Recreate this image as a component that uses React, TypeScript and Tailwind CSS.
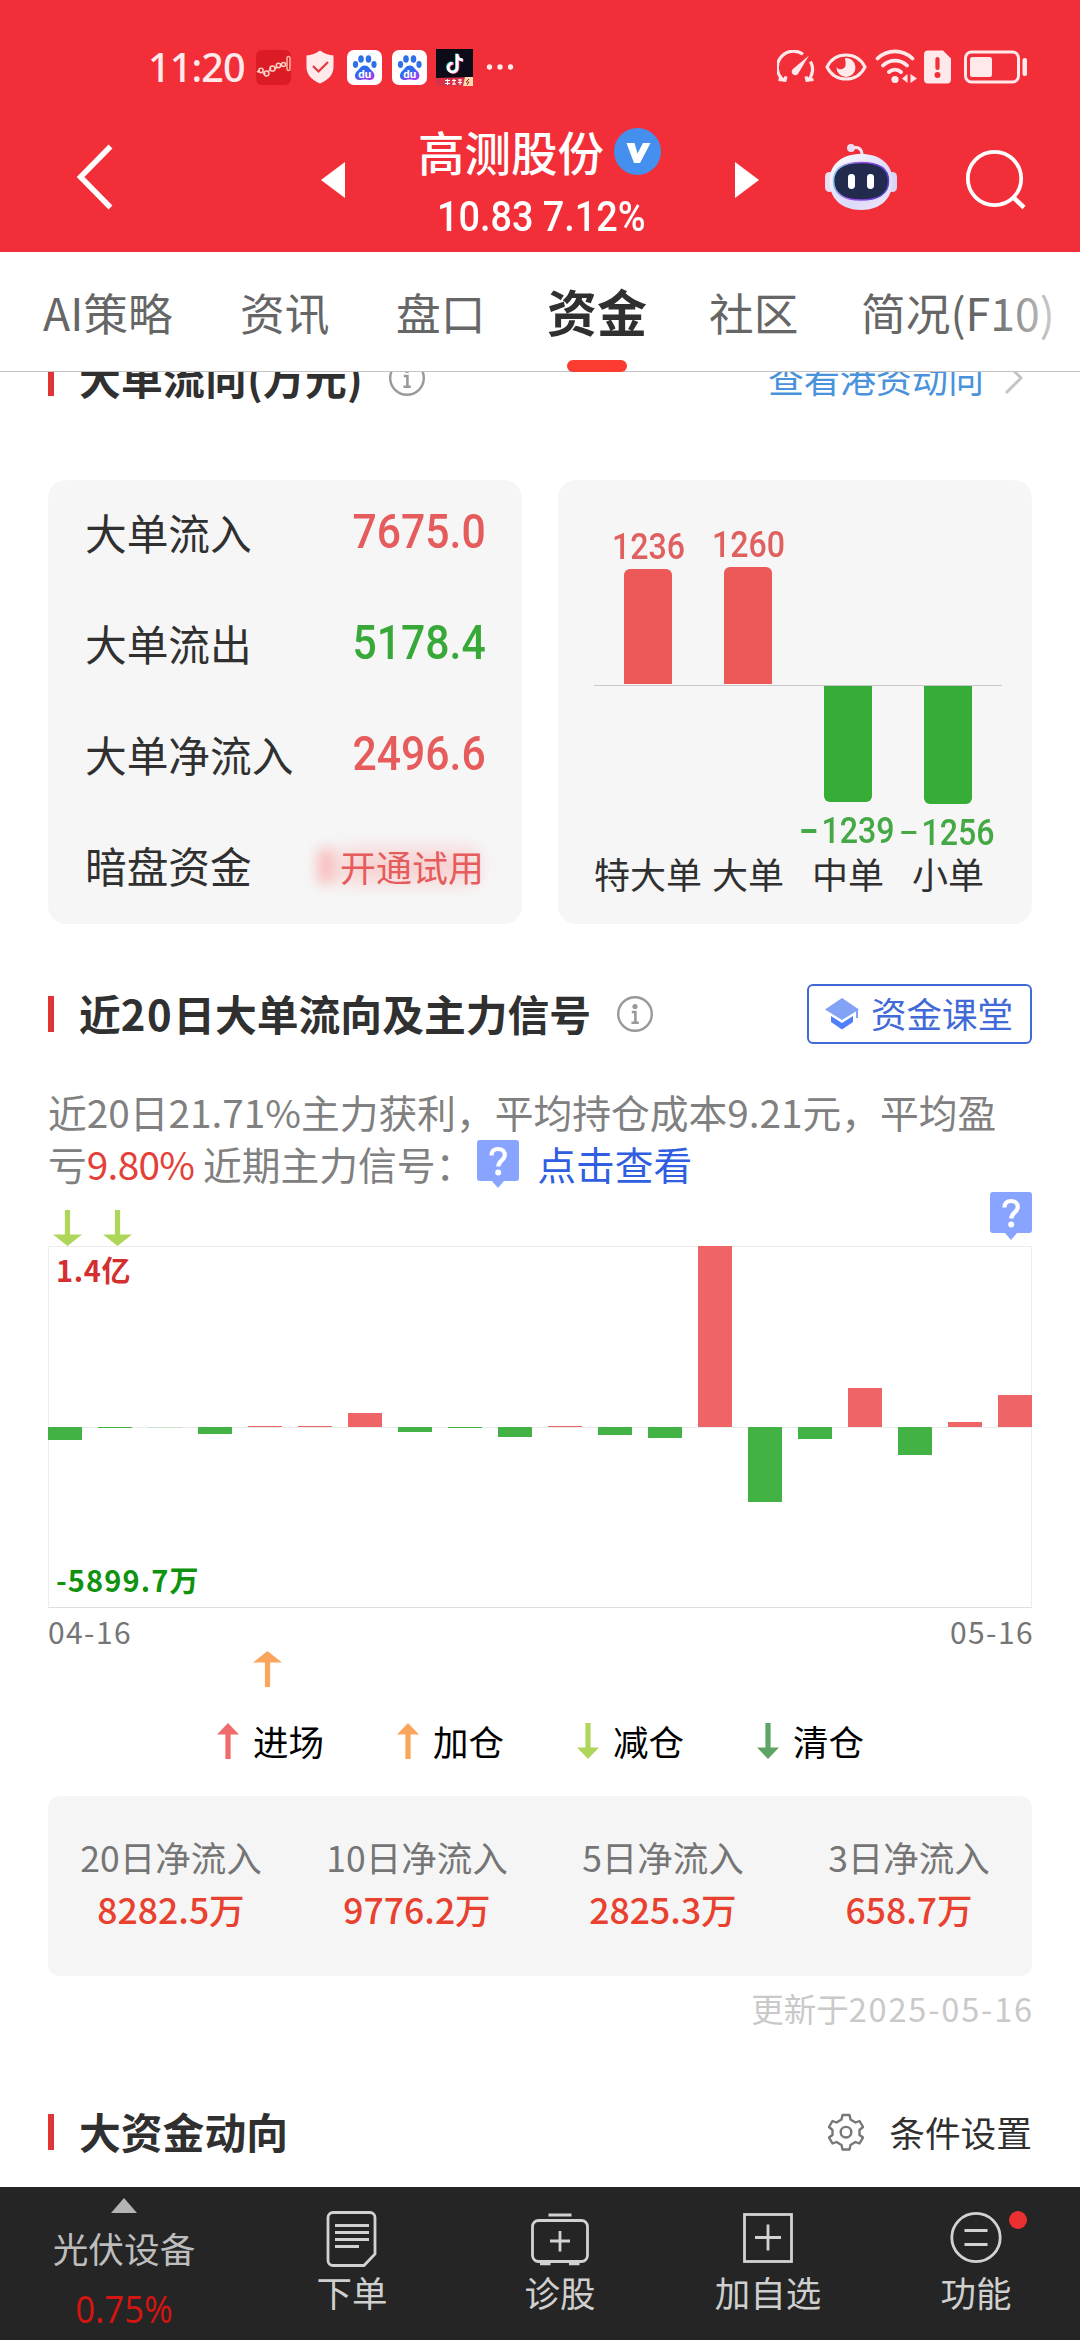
import type { ReactNode } from "react";

const DIN = "font-['Roboto','Noto_Sans_CJK_SC',sans-serif] font-medium";

function InfoIcon() {
  return (
    <svg width="38" height="38" viewBox="0 0 38 38" fill="none" stroke="#999" strokeWidth="2.4">
      <circle cx="19" cy="19" r="16.8" />
      <circle cx="19" cy="11.5" r="2.6" fill="#999" stroke="none" />
      <path d="M15.8 17h3.6v10.5M15.4 27.8h7.4" strokeWidth="2.6" />
    </svg>
  );
}

function Arrow({ color, down = false, head = 22 }: { color: string; down?: boolean; head?: number }) {
  const h = head / 2;
  return (
    <svg width={head} height="36" viewBox={`${-h} 0 ${head} 36`} fill={color} className={down ? "rotate-180" : ""}>
      <path d={`M0 0L${h} 11.5H2.6V36H-2.6V11.5H${-h}Z`} />
    </svg>
  );
}

function HelpBadge() {
  return (
    <svg width="42" height="48" viewBox="0 0 42 48" fill="none">
      <path d="M3 0H39a3 3 0 0 1 3 3V38a3 3 0 0 1-3 3H27L21 48L15 41H3a3 3 0 0 1-3-3V3a3 3 0 0 1 3-3Z" fill="#88a4ff" />
      <path d="M14.5 15.5C14.5 11 17 9 21 9s6.8 2.300 6.800 6c0 5.500-6.500 5.200-6.500 11.500" stroke="#fff" strokeWidth="4.200" />
      <circle cx="21.2" cy="32.500" r="3" fill="#fff" />
    </svg>
  );
}

function Baidu() {
  return (
    <svg width="35" height="35" viewBox="0 0 35 35">
      <defs>
        <linearGradient id="paw" x1="0" y1="0" x2="0.6" y2="1">
          <stop offset="0.5" stopColor="#2b6cf0" />
          <stop offset="1" stopColor="#a03cf0" />
        </linearGradient>
      </defs>
      <rect width="35" height="35" rx="7" fill="#fff" />
      <g fill="#2f6fe8">
        <ellipse cx="14" cy="9" rx="2.800" ry="3.800" />
        <ellipse cx="21.500" cy="9" rx="2.800" ry="3.800" />
        <ellipse cx="8.500" cy="14.500" rx="2.600" ry="3.400" />
        <ellipse cx="27" cy="14.500" rx="2.600" ry="3.400" />
      </g>
      <path d="M17.700 15.500c4 0 5 3.500 7.500 5.500 3.500 3 3 9-2.200 9-2 0-3-.5-5.300-.5s-3.300.5-5.300.5c-5.200 0-5.700-6-2.200-9 2.500-2 3.500-5.500 7.500-5.500Z" fill="url(#paw)" />
      <text x="17.800" y="27.500" textAnchor="middle" fontFamily="Roboto, sans-serif" fontSize="11.500" fontWeight="700" fill="#fff">du</text>
    </svg>
  );
}

function StatusBar() {
  return (
    <div className="flex h-[114px] items-center pt-[20px] pl-[148px]">
      <span className="w-[108px] font-['Noto_Sans','Noto_Sans_CJK_SC',sans-serif] text-[39.500px] leading-[50px] font-medium tracking-[-0.900px] text-[#ffe9ea]">11:20</span>
      <svg width="35" height="35" viewBox="0 0 35 35">
        <rect width="35" height="35" rx="6" fill="#dc1c24" />
        <path d="M1 22l3-1.500M7 23l2.500 1M13 21l2-3M18.500 19l2.500-2M24 16l2-1" stroke="#ffd0c4" strokeWidth="1.800" fill="none" />
        <g fill="none" stroke="#ffd0c4" strokeWidth="1.500">
          <circle cx="5" cy="20.500" r="2.200" />
          <circle cx="10.500" cy="23.500" r="2.400" />
          <circle cx="16.500" cy="18.500" r="2.600" />
          <circle cx="22.500" cy="15.500" r="2.200" />
          <circle cx="27.500" cy="14.500" r="2" />
          <rect x="31" y="6.500" width="3" height="14" rx="1.500" stroke="#ffb3a2" />
        </g>
      </svg>
      <svg width="28" height="34" viewBox="0 0 28 34" className="ml-[15px]">
        <path d="M14 0.500C18 3.500 22.500 5 27.500 5.500V17c0 8-6 13.500-13.500 16.500C6.500 30.500.500 25 .500 17V5.500C5.500 5 10 3.500 14 .500Z" fill="#ffe9ea" />
        <path d="M7 16l5.500 5.500L22 12" fill="none" stroke="#e5383e" strokeWidth="2.200" />
      </svg>
      <div className="ml-[13px] flex gap-[10px]">
        <Baidu />
        <Baidu />
      </div>
      <svg width="37" height="37" viewBox="0 0 37 37" className="ml-[9px]">
        <rect width="37" height="37" fill="#0c0c18" />
        <g fill="none" strokeWidth="2.800">
          <path d="M20.500 4.500V18a4.500 4.500 0 1 1-5-4.400M20.500 6c.8 3 2.700 4.500 6 4.700" stroke="#25e0e0" />
          <path d="M22 5.500V19a4.500 4.500 0 1 1-4-4.400M22 7c.8 3 2.700 4.500 5.500 4.700" stroke="#f0386a" />
          <path d="M21.200 5V18.500a4.500 4.500 0 1 1-4.500-4.400M21.200 6.500c.8 3 2.700 4.500 5.700 4.700" stroke="#fff" />
        </g>
        <path d="M0 29l37-1v9H0Z" fill="#d8324a" />
        <path d="M29 28h8v9h-10Z" fill="#ffd9b0" />
        <path d="M9 31.500h5M9 34.500h5M11.500 30v6M16 31.500h4M18 30v6M16 35h4M22 31h4M22 33.500h4M24 30v6" stroke="#fff" strokeWidth="1.100" />
        <path d="M33 30l-3 3h3l-2 3" stroke="#a03020" fill="none" />
      </svg>
      <svg width="28" height="8" viewBox="0 0 28 8" fill="#ffe9ea" className="ml-[13px]">
        <circle cx="3.500" cy="4" r="2.700" />
        <circle cx="14" cy="4" r="2.700" />
        <circle cx="24.500" cy="4" r="2.700" />
      </svg>
      <svg width="38" height="34" viewBox="0 0 38 34" fill="none" stroke="#ffe9ea" strokeWidth="3.200" className="ml-[263px]">
        <path d="M26 4.200A16 16 0 0 0 7 30.500M1.500 29.500l6.500.8 1-4M33.500 11.500a16 16 0 0 1-2.500 19M36.500 29.500l-6.500.8-1-4" />
        <path d="M32 5.500L21.800 22.500a3.600 3.600 0 1 1-5.300-4Z" fill="#ffe9ea" stroke="none" />
      </svg>
      <svg width="42" height="28" viewBox="0 0 42 28" fill="none" className="ml-[10px]">
        <path d="M2 14C6 6 13 2 21 2s15 4 19 12c-4 8-11 12-19 12S6 22 2 14Z" stroke="#ffe9ea" strokeWidth="3" />
        <path d="M20 5a9.500 9.500 0 1 1-8.500 9c2 3.500 8 3 9-1.500.6-3-.5-5-.5-7.500Z" fill="#ffe9ea" />
      </svg>
      <svg width="42" height="36" viewBox="0 0 42 36" fill="none" stroke="#ffe9ea" strokeWidth="3.800" strokeLinecap="round" className="ml-[8px]">
        <path d="M2.500 9.500a25 25 0 0 1 35 0M8 16.500a17 17 0 0 1 24 0M14 23a9 9 0 0 1 12 0" />
        <circle cx="20" cy="30.500" r="3.600" fill="#ffe9ea" stroke="none" />
        <path d="M32.500 25v9l-5.500-4.500ZM35.500 25v9l6.500-4.500Z" fill="#ffe9ea" stroke="none" />
      </svg>
      <svg width="27" height="34" viewBox="0 0 27 34" className="ml-[7px]">
        <path d="M4 0.500H19L27 8.500V29.500a4 4 0 0 1-4 4H4a4 4 0 0 1-4-4V4.500a4 4 0 0 1 4-4Z" fill="#ffe9ea" />
        <path d="M13.500 9v9" stroke="#f13038" strokeWidth="4.200" strokeLinecap="round" />
        <circle cx="13.500" cy="25" r="3" fill="#f13038" />
      </svg>
      <svg width="64" height="34" viewBox="0 0 64 34" fill="none" className="ml-[13px]">
        <rect x="1.500" y="2" width="53" height="30" rx="6" stroke="#ffe9ea" strokeWidth="3" />
        <rect x="6" y="7" width="22" height="20" rx="2.500" fill="#ffe9ea" />
        <rect x="58.500" y="8" width="4.500" height="18" rx="2" fill="#ffe9ea" />
      </svg>
    </div>
  );
}

function Robot() {
  return (
    <svg width="72" height="68" viewBox="0 0 72 68" fill="none">
      <defs>
        <linearGradient id="shell" x1="0" y1="0" x2="1" y2="1">
          <stop offset="0" stopColor="#fff" />
          <stop offset="0.600" stopColor="#dcd9fb" />
          <stop offset="1" stopColor="#efe9fa" />
        </linearGradient>
        <linearGradient id="rim" x1="0" y1="0" x2="1" y2="0.200">
          <stop offset="0" stopColor="#8fe3f7" />
          <stop offset="0.500" stopColor="#9a4de8" />
          <stop offset="1" stopColor="#5a3fd0" />
        </linearGradient>
      </defs>
      <path d="M27 5c7-1.500 10 1 10 7" stroke="#f0e3f3" strokeWidth="3" />
      <circle cx="26" cy="5" r="4" fill="#eadcf3" />
      <rect x="0" y="29" width="9" height="20" rx="4.500" fill="#e9dcf3" />
      <rect x="63" y="29" width="9" height="20" rx="4.500" fill="#d8d5f8" />
      <path d="M36 11c19 0 31.500 10 31.500 27S56 67 36 67 4.500 55 4.500 38 17 11 36 11Z" fill="url(#shell)" />
      <path d="M36 19.500c17 0 27.500 5 27.500 18.500S52 57 36 57 8.500 51.500 8.500 38 19 19.500 36 19.500Z" fill="#222b4e" stroke="url(#rim)" strokeWidth="1.600" />
      <rect x="23" y="31" width="7" height="15" rx="3.400" fill="#fff" />
      <rect x="42" y="31" width="7" height="15" rx="3.400" fill="#fff" />
    </svg>
  );
}

function TitleBar() {
  return (
    <div className="flex h-[138px] items-start text-white">
      <svg width="40" height="68" viewBox="0 0 40 68" fill="none" stroke="#fff" strokeWidth="5.400" className="mt-[29px] ml-[76px]">
        <path d="M34.500 3.500L4.500 34L34.500 64.500" />
      </svg>
      <svg width="24" height="36" viewBox="0 0 24 36" fill="#fff" className="mt-[48px] ml-[205px]">
        <path d="M24 0V36L0 18Z" />
      </svg>
      <div className="mt-[10px] ml-[73px] w-[248px]">
        <div className="flex items-center gap-[10px]">
          <span className="text-[46.500px] leading-[54px] font-medium">高测股份</span>
          <svg width="47" height="47" viewBox="0 0 47 47" className="mt-px">
            <circle cx="23.500" cy="23.500" r="23.500" fill="#458fee" />
            <path d="M12.500 15h8l3 10.500L29 15h7.500L26 35h-6Z" fill="#fff" />
          </svg>
        </div>
        <div className={`${DIN} mt-[15px] ml-[19px] origin-left scale-x-90 text-[42px] leading-[48px] whitespace-nowrap`}>10.83 7.12%</div>
      </div>
      <svg width="24" height="36" viewBox="0 0 24 36" fill="#fff" className="mt-[48px] ml-[69px]">
        <path d="M0 0V36L24 18Z" />
      </svg>
      <div className="mt-[29px] ml-[66px]">
        <Robot />
      </div>
      <svg width="62" height="62" viewBox="0 0 62 62" fill="none" stroke="#fff" strokeWidth="3.800" className="mt-[35px] ml-[68px]">
        <circle cx="29.500" cy="29.500" r="26.700" />
        <path d="M48.500 48.500L59 58.500" strokeWidth="4.500" />
      </svg>
    </div>
  );
}

function Tabs() {
  return (
    <nav className="relative flex h-[120px] items-center border-b border-[#c4c4c4] pl-[43px] text-[44.700px] leading-[60px] whitespace-nowrap text-[#666]">
      <span className="w-[197px]">AI策略</span>
      <span className="w-[156px]">资讯</span>
      <span className="w-[151px]">盘口</span>
      <span className="relative -mt-[4px] w-[162px] text-[50px] font-bold text-[#303030]">
        资金
        <i className="absolute top-[80px] left-[20px] h-[12px] w-[60px] rounded-full bg-[#fc3c30]" />
      </span>
      <span className="w-[152px]">社区</span>
      <span>简况(F10)</span>
      <div className="absolute top-0 right-0 h-[118px] w-[90px] bg-linear-to-r from-white/0 to-white/95" />
    </nav>
  );
}

function SectionTitle({ children, info = false, right }: { children: ReactNode; info?: boolean; right?: ReactNode }) {
  return (
    <div className="flex h-[60px] items-center justify-between">
      <div className="flex items-center">
        <i className="mr-[25px] h-[36px] w-[6px] bg-[#e03535]" />
        <h2 className="-mt-[3px] text-[41.800px] leading-[60px] font-bold whitespace-nowrap text-[#303030]">{children}</h2>
        {info && (
          <div className="ml-[25px]">
            <InfoIcon />
          </div>
        )}
      </div>
      {right}
    </div>
  );
}

const FLOWS = [
  { label: "大单流入", value: "7675.0", color: "text-[#e65c5c]" },
  { label: "大单流出", value: "5178.4", color: "text-[#38a938]" },
  { label: "大单净流入", value: "2496.6", color: "text-[#e65c5c]" },
];

function FlowCard() {
  return (
    <div className="grid h-[444px] grid-rows-4 rounded-[18px] bg-[#f6f6f6] pr-[36px] pl-[37px] text-[#303030]">
      {FLOWS.map((f) => (
        <div key={f.label} className="flex h-[104px] items-center justify-between">
          <span className="text-[41.700px] leading-[60px]">{f.label}</span>
          <span className={`${DIN} ${f.color} origin-right scale-x-[0.890] text-[48px] leading-[60px]`}>{f.value}</span>
        </div>
      ))}
      <div className="flex h-[104px] items-center justify-between">
        <span className="text-[41.700px] leading-[60px]">暗盘资金</span>
        <span className="relative pt-[2px] pr-[2px] text-[36px] leading-[50px] text-[#e65c5c]">
          <i className="absolute top-[10px] -left-[22px] h-[34px] w-[16px] bg-[#ff4a4a]/35 blur-[7px]" />
          <i className="absolute top-[10px] left-0 h-[34px] w-[138px] bg-[#ff4a4a]/20 blur-[9px]" />
          <span className="relative">开通试用</span>
        </span>
      </div>
    </div>
  );
}

const ORDERS = [
  { label: "特大单", value: 1236, size: 115.500 },
  { label: "大单", value: 1260, size: 117.500 },
  { label: "中单", value: -1239, size: 116 },
  { label: "小单", value: -1256, size: 117.500 },
];

function OrderChart() {
  return (
    <div className="relative h-[444px] rounded-[18px] bg-[#f6f6f6] px-[36px]">
      <div className="ml-[4px] grid w-[400px] grid-cols-4">
        {ORDERS.map((o) => (
          <div key={o.label} className="flex h-[444px] flex-col items-center">
            <div className="flex h-[204px] flex-col items-center justify-end">
              {o.value > 0 && (
                <>
                  <span className={`${DIN} scale-x-[0.880] text-[36.500px] leading-[44px] text-[#e06060]`}>{o.value}</span>
                  <i className="w-[48px] rounded-t-[6px] bg-[#ed5959]" style={{ height: o.size }} />
                </>
              )}
            </div>
            <div className="mt-[2px] flex h-[163px] flex-col items-center">
              {o.value < 0 && (
                <>
                  <i className="w-[48px] shrink-0 rounded-b-[6px] bg-[#36ad36]" style={{ height: o.size }} />
                  <span className={`${DIN} mt-[7px] flex scale-x-[0.880] items-center text-[36.500px] leading-[44px] text-[#44a944]`}>
                    <i className="mr-[6px] h-[3.500px] w-[17px] bg-[#44a944]" />
                    {-o.value}
                  </span>
                </>
              )}
            </div>
            <span className="text-[36px] leading-[48px] whitespace-nowrap text-[#303030]">{o.label}</span>
          </div>
        ))}
      </div>
      <i className="absolute top-[205px] left-[36px] h-px w-[408px] bg-[#c8c8c8]" />
    </div>
  );
}

const DAYS = [-13, -1, -0.500, -7, 1, 1, 14.500, -4.500, -1, -10, 1.500, -8, -11, 181, -75, -12, 39, -28, 5, 32];

function DailyChart() {
  return (
    <div className="relative h-[362px] border border-[#ececec] border-b-[#dedede]">
      <i className="absolute top-[180px] left-0 h-px w-full bg-[#ececec]" />
      <div className="absolute -inset-x-px -top-px flex justify-between">
        {DAYS.map((d, i) => (
          <div key={i} className="flex h-[362px] w-[33.500px] flex-col">
            <div className="flex h-[181px] flex-col justify-end">{d > 0 && <i className="bg-[#ef6567]" style={{ height: d }} />}</div>
            {d < 0 && <i className="bg-[#43b244]" style={{ height: d === -0.5 ? 1 : -d, opacity: d === -0.5 ? 0.2 : 1 }} />}
          </div>
        ))}
      </div>
      <div className="flex h-full flex-col justify-between px-[7px] pt-[3px] pb-[9px] text-[29px] leading-[38px] font-bold">
        <span className="tracking-[0.600px] text-[#d42f2f]">1.4亿</span>
        <span className="tracking-[1.100px] text-[#0f930f]">-5899.7万</span>
      </div>
    </div>
  );
}

const LEGEND = [
  { label: "进场", color: "#f06c6c", down: false },
  { label: "加仓", color: "#f9a65c", down: false },
  { label: "减仓", color: "#aed65a", down: true },
  { label: "清仓", color: "#5ea565", down: true },
];

const TOTALS = [
  ["20日净流入", "8282.5万"],
  ["10日净流入", "9776.2万"],
  ["5日净流入", "2825.3万"],
  ["3日净流入", "658.7万"],
];

function NavItem({ icon, label, dot = false }: { icon: ReactNode; label: string; dot?: boolean }) {
  return (
    <div className="relative flex w-[208px] flex-col items-center pt-[20px]">
      <svg width="62" height="60" viewBox="0 0 62 60" fill="none" stroke="#d2d2d2" strokeWidth="2.800">
        {icon}
      </svg>
      <span className="text-[35.500px] leading-[50px] text-[#cfcfcf]">{label}</span>
      {dot && <i className="absolute top-[24px] left-[137px] size-[18px] rounded-full bg-[#ea3030]" />}
    </div>
  );
}

function BottomNav() {
  return (
    <footer className="flex h-[153px] bg-[#252525]">
      <div className="flex w-[248px] flex-col items-center pt-[11px]">
        <svg width="26" height="15" viewBox="0 0 26 15" fill="#b4b4b4">
          <path d="M13 0L26 15H0Z" />
        </svg>
        <span className="mt-[9px] text-[35.700px] leading-[52px] text-[#bdbdbd]">光伏设备</span>
        <span className="mt-[8px] scale-x-[0.910] font-['Noto_Sans','Noto_Sans_CJK_SC',sans-serif] text-[38px] leading-[52px] text-[#d41612]">0.75%</span>
      </div>
      <NavItem
        label="下单"
        icon={
          <>
            <path d="M12 5.500H49a5 5 0 0 1 5 5V47L43 58.500H12a5 5 0 0 1-5-5V10.500a5 5 0 0 1 5-5Z" />
            <path d="M14 18.500H48M14 25.500H48M14 32.500H48M14 39.500H38" />
          </>
        }
      />
      <NavItem
        label="诊股"
        icon={
          <>
            <rect x="3.500" y="13.500" width="55" height="41" rx="6" />
            <path d="M19.500 8H42.500M31 24V44.500M21 34H41" />
            <path d="M11 56.500H21.500M40 56.500H50.500" strokeWidth="3.500" />
          </>
        }
      />
      <NavItem
        label="加自选"
        icon={
          <>
            <rect x="7.500" y="7.500" width="47" height="47" />
            <path d="M31 17.500V43.500M18 30.500H44" />
          </>
        }
      />
      <NavItem
        label="功能"
        dot
        icon={
          <>
            <circle cx="31" cy="30.500" r="24.200" />
            <path d="M19.500 23.500H42.500M19.500 37.500H42.500" />
          </>
        }
      />
    </footer>
  );
}

export default function App() {
  return (
    <div className="flex h-[2340px] w-[1080px] flex-col overflow-hidden bg-white font-['Noto_Sans_CJK_SC',sans-serif]">
      <header className="h-[252px] bg-[#f22f38]">
        <StatusBar />
        <TitleBar />
      </header>
      <Tabs />
      <main className="h-[1815px] overflow-hidden px-[48px]">
        <div className="-mt-[24px]">
          <SectionTitle
            info
            right={
              <a className="flex items-center text-[36px] leading-[50px] text-[#4a93dc]">
                <span className="-mt-[3px]">查看港资动向</span>
                <svg width="20" height="34" viewBox="0 0 20 34" fill="none" stroke="#c4c4c4" strokeWidth="3" className="mr-[8px] ml-[20px]">
                  <path d="M2 2L17 17L2 32" />
                </svg>
              </a>
            }
          >
            <span className="tracking-[0.200px]">大单流向(万元)</span>
          </SectionTitle>
        </div>
        <div className="mt-[72px] grid grid-cols-2 gap-[36px]">
          <FlowCard />
          <OrderChart />
        </div>
        <div className="mt-[60px]">
          <SectionTitle
            info
            right={
              <a className="flex h-[60px] w-[225px] items-center rounded-[6px] border-2 border-[#4169d8] pl-[16px] text-[35.500px] leading-[50px] text-[#4169d8]">
                <svg width="34" height="32" viewBox="0 0 34 32" className="mr-[12px]">
                  <path d="M17 0L34 11.500L17 22L0 11.500Z" fill="#82a2f5" />
                  <path d="M6 18L17 25L28 18V24L17 31.500L6 24Z" fill="#4f80fa" />
                  <path d="M32 12V20" stroke="#82a2f5" strokeWidth="2" />
                </svg>
                <span className="-mt-[3px]">资金课堂</span>
              </a>
            }
          >
            近<span className="tracking-[1.500px]">20</span>日大单流向及主力信号
          </SectionTitle>
        </div>
        <div className="mt-[41px] h-[108px] text-[38.750px] leading-[52px] whitespace-nowrap text-[#808080]">
          <p>近20日21.71%主力获利，平均持仓成本9.21元，平均盈</p>
          <div className="flex">
            <span>
              亏<span className="tracking-[-0.700px] text-[#e34137]">9.80%</span> 近期主力信号：
            </span>
            <div className="mt-[3px] ml-[3px]">
              <HelpBadge />
            </div>
            <a className="ml-[18px] text-[#2f5fe0]">点击查看</a>
          </div>
        </div>
        <div className="relative flex h-[53px] items-end gap-[21px] pl-[4.500px]">
          <Arrow color="#aed65a" down head={29} />
          <Arrow color="#aed65a" down head={29} />
          <div className="absolute -top-px right-0">
            <HelpBadge />
          </div>
        </div>
        <DailyChart />
        <div className="flex h-[43px] items-center justify-between pt-[2px] text-[30px] leading-[36px] tracking-[1.400px] text-[#757575]">
          <span>04-16</span>
          <span className="-mr-[2px]">05-16</span>
        </div>
        <div className="h-[72px] pl-[205px]">
          <Arrow color="#f9a65c" head={29} />
        </div>
        <div className="flex h-[36px] pl-[169px]">
          {LEGEND.map((l) => (
            <div key={l.label} className="flex w-[180px] items-center">
              <Arrow color={l.color} down={l.down} />
              <span className="-mt-px ml-[14px] text-[35.500px] leading-[40px] text-black">{l.label}</span>
            </div>
          ))}
        </div>
        <div className="mt-[37px] grid h-[180px] grid-cols-4 rounded-[12px] bg-[#f5f5f5] pt-[35px] text-center text-[35.500px] leading-[52px]">
          {TOTALS.map(([label, value]) => (
            <div key={label}>
              <div className="text-[#757575]">{label}</div>
              <div className="font-medium text-[#e8412f]">{value}</div>
            </div>
          ))}
        </div>
        <div className="mt-[8px] text-right text-[32.500px] leading-[48px] text-[#c9c9c9]">
          更新于<span className="-mr-[2px] tracking-[1.850px]">2025-05-16</span>
        </div>
        <div className="mt-[70px]">
          <SectionTitle
            right={
              <a className="flex items-center text-[35.700px] leading-[50px] text-[#303030]">
                <svg width="36" height="38" viewBox="0 0 36 38" fill="none" stroke="#777" strokeWidth="2.400" strokeLinejoin="round" className="mr-[25px]">
                  <path d="M14.500 2H21.500L22.500 6.500L27.500 9.500L31.500 8L35 14L31.500 17V22L35 24.500L31.500 30.500L27.500 29L22.500 32L21.500 36.500H14.500L13.500 32L8.500 29L4.500 30.500L1 24.500L4.500 22V17L1 14L4.500 8L8.500 9.500L13.500 6.500Z" />
                  <circle cx="18" cy="19.200" r="5.300" />
                </svg>
                <span>条件设置</span>
              </a>
            }
          >
            大资金动向
          </SectionTitle>
        </div>
      </main>
      <BottomNav />
    </div>
  );
}
